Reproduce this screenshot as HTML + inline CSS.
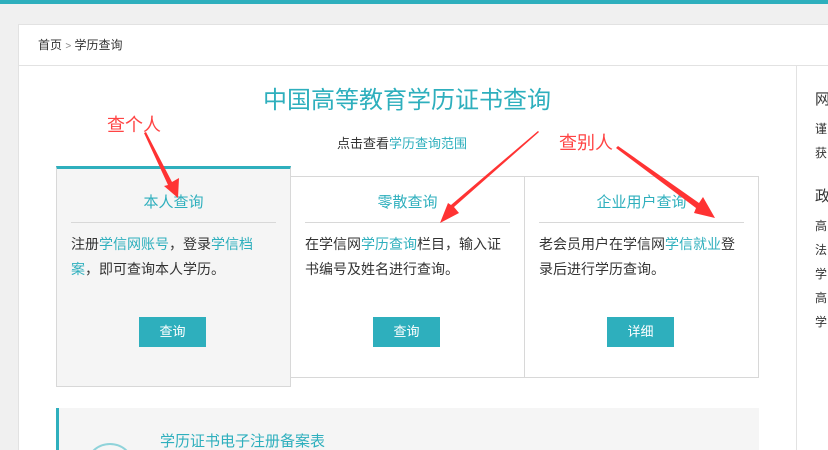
<!DOCTYPE html>
<html style="overflow:hidden;height:450px"><head><meta charset="utf-8"><style>
*{margin:0;padding:0;box-sizing:border-box}
body{width:828px;height:450px;overflow:hidden;background:#f0f0f0;font-family:"Liberation Sans","Noto Sans CJK SC",sans-serif;color:#333}
#w{position:relative;width:828px;height:450px;overflow:hidden}
.a{position:absolute}
.t{color:#2eafbd}
.card{position:absolute;border:1px solid #d8d8d8;background:#fff}
.ct{position:absolute;left:14px;right:14px;top:14px;height:32px;border-bottom:1px solid #d8d8d8;text-align:center;color:#2eafbd;font-size:15px;line-height:24px}
.cx{position:absolute;left:14px;width:202px;top:55px;font-size:14px;line-height:25px;color:#333}
.btn{position:absolute;width:67px;height:30px;background:#2eafbd;color:#fff;font-size:13px;line-height:30px;text-align:center}
.r{position:absolute;left:815px;font-size:12px;color:#333}
</style></head><body><div id="w">
<div class="a" style="left:0;top:0;width:828px;height:4px;background:#2eafbd"></div>
<div class="a" style="left:18px;top:24px;width:810px;height:426px;background:#fff;border:1px solid #e2e2e2;border-right:none;border-bottom:none"></div>
<div class="a" style="left:18px;top:65px;width:810px;height:1px;background:#e2e2e2"></div>
<div class="a" style="left:38px;top:37px;font-size:12px;line-height:16px">首页 <span style="color:#888;font-size:10px">&gt;</span> 学历查询</div>
<div class="a" style="left:796px;top:66px;width:1px;height:384px;background:#e2e2e2"></div>
<div class="a t" style="left:207px;width:400px;text-align:center;top:86px;font-size:24px;line-height:30px">中国高等教育学历证书查询</div>
<div class="a" style="left:337px;top:135px;font-size:13px;line-height:17px">点击查看<span class="t">学历查询范围</span></div>

<div class="card" style="left:290px;top:176px;width:235px;height:202px"><div class="ct">零散查询</div><div class="cx">在学信网<span class="t">学历查询</span>栏目，输入证书编号及姓名进行查询。</div><div class="btn" style="left:82px;top:140px">查询</div></div>
<div class="card" style="left:524px;top:176px;width:235px;height:202px"><div class="ct">企业用户查询</div><div class="cx">老会员用户在学信网<span class="t">学信就业</span>登录后进行学历查询。</div><div class="btn" style="left:82px;top:140px">详细</div></div>
<div class="card" style="left:56px;top:166px;width:235px;height:221px;background:#f5f5f5;border-top:3px solid #2eafbd"><div class="ct" style="top:22px">本人查询</div><div class="cx" style="top:63px">注册<span class="t">学信网账号</span>，登录<span class="t">学信档案</span>，即可查询本人学历。</div><div class="btn" style="left:82px;top:148px">查询</div></div>

<div class="a" style="left:56px;top:408px;width:703px;height:42px;background:#f5f5f5;border-left:3px solid #2eafbd"></div>
<div class="a t" style="left:160px;top:433px;font-size:15px;line-height:17px">学历证书电子注册备案表</div>
<div class="a" style="left:85px;top:443px;width:50px;height:7px;overflow:hidden"><div style="width:50px;height:50px;border:2px solid #8fd3da;border-radius:50%"></div></div>

<div class="r t" style="top:88px;font-size:15px">网</div>
<div class="r" style="top:120px">谨</div><div class="r" style="top:144px">获</div>
<div class="r t" style="top:185px;font-size:15px">政</div>
<div class="r" style="top:217px">高</div><div class="r" style="top:241px">法</div><div class="r" style="top:265px">学</div><div class="r" style="top:289px">高</div><div class="r" style="top:313px">学</div>

<div class="a" style="left:107px;top:114px;font-size:18px;color:#f44;line-height:22px">查个人</div>
<div class="a" style="left:559px;top:132px;font-size:18px;color:#f44;line-height:22px">查别人</div>
<svg class="a" style="left:0;top:0" width="828" height="450">
<g fill="#f33">
<polygon points="144,133 146,132 172,182 179,178 178,198 164,186 168,185"/>
<polygon points="538,131 539,132 454,207 459,213 440,223 448,203 451,205"/>
<polygon points="616,148 618,146 699,203 703,197 715,218 694,213 696,208"/>
</g></svg>
</div></body></html>
